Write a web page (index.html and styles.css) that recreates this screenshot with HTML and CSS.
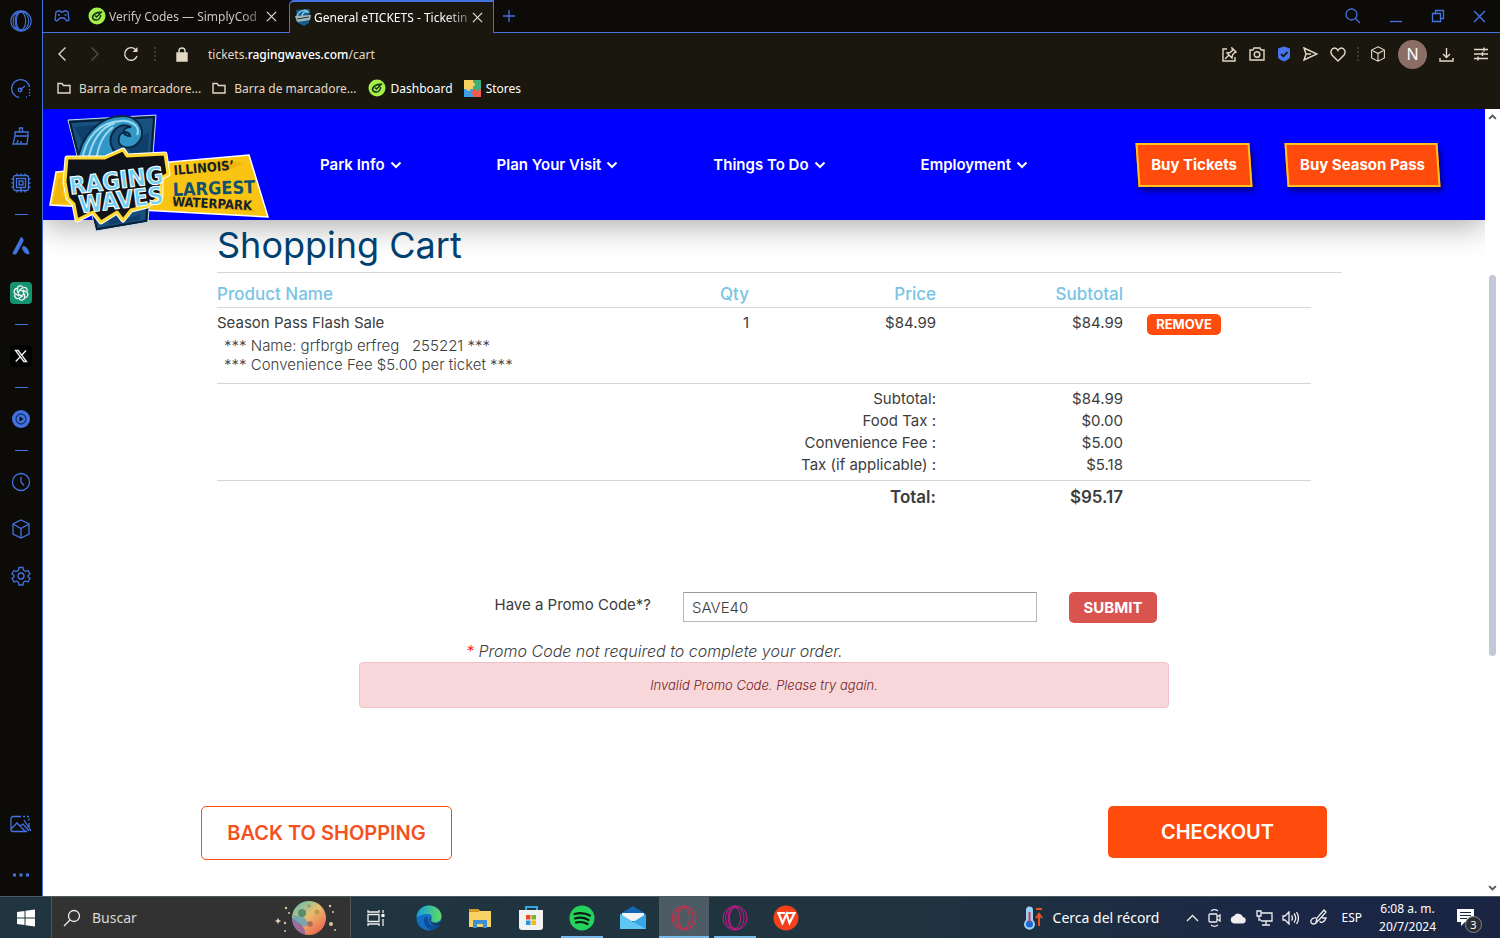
FILE: index.html
```html
<!DOCTYPE html>
<html lang="en">
<head>
  <meta charset="UTF-8">
  <meta name="viewport" content="width=device-width, initial-scale=1">
  <title>General eTICKETS - Ticketing</title>
  <link rel="stylesheet" href="styles.css">
</head>
<body>
  <!-- shared icons -->
  <svg class="sprite" aria-hidden="true">
    <symbol id="close" viewBox="0 0 12 12"><path d="M1 1l10 10M11 1L1 11"/></symbol>
    <symbol id="folder" viewBox="0 0 14 12"><path d="M1 1.500h4l1.500 2H13V11H1z"/></symbol>
    <symbol id="cube" viewBox="0 0 20 20"><path d="M10 1l8 4v10l-8 4-8-4V5zM2 5l8 4.500 8-4.500M10 9.500V19"/></symbol>
    <symbol id="opera" viewBox="0 0 26 26"><circle cx="13" cy="13" r="12"/><ellipse cx="13" cy="13" rx="5.500" ry="10.500"/><path d="M9 3C2 6 2 20 9 23M13 1.500c12 1 12 22 0 23M13 1.500C4 3 4 23 13 24.500"/></symbol>
    <symbol id="down" viewBox="0 0 12 8"><path d="M1.500 1.500L6 6l4.500-4.500"/></symbol>
    <symbol id="check-leaf" viewBox="0 0 18 18"><circle cx="9" cy="9" r="8.500" fill="#a6f04a" stroke="none"/><path d="M14 4.500L8.500 10 6.800 8.500M13 5.500C9 5 5 7 4.500 10c0 3 4 4 6.500 2 1.200-1 1.800-2.500 1.500-4" stroke="#17351a" stroke-width="1.600" fill="none"/></symbol>
  </svg>

  <div class="browser">
    <aside class="sidebar">
      <button class="side-btn side-first" aria-label="Opera"><svg width="22" height="22"><use href="#opera"/></svg></button>
      <button class="side-btn" aria-label="Speed dial"><svg width="20" height="20" viewBox="0 0 20 20"><path d="M8 18.500A9 9 0 1 1 18.500 8M9 11l5-4"/><circle cx="9" cy="11" r="1.800"/><path d="M18.500 10v7M15 18h1" stroke-dasharray="1.500 1.500"/></svg></button>
      <button class="side-btn" aria-label="Cleaner"><svg width="18" height="20" viewBox="0 0 18 20"><path d="M7.500 6V2h3v4M3 6h13v4H3zM3 10L1 18h14l1-8M5 18l1-4M9 18v-3"/></svg></button>
      <button class="side-btn" aria-label="GX Control"><svg width="20" height="20" viewBox="0 0 20 20"><rect x="2.500" y="2.500" width="15" height="15" rx="2"/><rect x="5.500" y="5.500" width="9" height="9"/><rect x="8" y="8" width="4" height="4"/><path d="M6 .5v2M10 .5v2M14 .5v2M6 17.500v2M10 14v5.500M14 17.500v2M.5 6h2M.5 10h2M.5 14h2M17.500 6h2M17.500 10h2M17.500 14h2"/></svg></button>
      <hr>
      <button class="side-btn" aria-label="Aria"><svg width="18" height="20" viewBox="0 0 18 20"><path class="solid" d="M9 1c1 0 3 2 2.500 4L5 17c-1 2-4 2-4.500 0zM11 10c3 0 6 3 6.500 8-3 1-6-1-7.500-6z"/></svg></button>
      <button class="side-btn" aria-label="ChatGPT"><svg class="gpt" width="22" height="22" viewBox="0 0 22 22"><rect width="22" height="22" rx="4" fill="#159270" stroke="none"/><path d="M11 8.200L7.500 10V6.500C7.500 3.500 12 3 13 5.500"/><path d="M11 8.200L7.500 10V6.500C7.500 3.500 12 3 13 5.500" transform="rotate(60 11 11)"/><path d="M11 8.200L7.500 10V6.500C7.500 3.500 12 3 13 5.500" transform="rotate(120 11 11)"/><path d="M11 8.200L7.500 10V6.500C7.500 3.500 12 3 13 5.500" transform="rotate(180 11 11)"/><path d="M11 8.200L7.500 10V6.500C7.500 3.500 12 3 13 5.500" transform="rotate(240 11 11)"/><path d="M11 8.200L7.500 10V6.500C7.500 3.500 12 3 13 5.500" transform="rotate(300 11 11)"/></svg></button>
      <hr>
      <button class="side-btn" aria-label="X"><svg class="gpt" width="22" height="22" viewBox="0 0 22 22"><rect width="22" height="22" rx="4" fill="#000" stroke="none"/><path d="M5.500 5.500h2.700l8.300 11h-2.700zM16 5.500l-4.300 4.800M10 12l-4.300 4.500"/></svg></button>
      <hr>
      <button class="side-btn" aria-label="Player"><svg width="20" height="20" viewBox="0 0 20 20"><circle class="solid" cx="10" cy="10" r="9"/><circle cx="10" cy="10" r="5" stroke="#173478"/><path d="M8.500 7.500v5l4-2.500z" fill="#0c0b09" stroke="none"/></svg></button>
      <hr>
      <button class="side-btn" aria-label="History"><svg width="20" height="20" viewBox="0 0 20 20"><circle cx="10" cy="10" r="8.500"/><path d="M10 5v5l3 3.500"/></svg></button>
      <button class="side-btn" aria-label="Extensions"><svg width="20" height="20"><use href="#cube"/></svg></button>
      <button class="side-btn" aria-label="Settings"><svg width="20" height="20" viewBox="0 0 20 20"><circle cx="10" cy="10" r="3"/><path d="M8 1.500h4l.5 2.700 2 1.200L17 4.500l2 3.400-2 1.600v1.500l2 1.500-2 3.500-2.600-1-2 1.300-.4 2.700H8l-.5-2.700-2-1.200L3 16l-2-3.500L3 11V9.500L1 7.900l2-3.400 2.500 1 2-1.300z"/></svg></button>
      <span class="side-space"></span>
      <button class="side-btn" aria-label="Wallpaper"><svg width="22" height="18" viewBox="0 0 22 18"><path d="M11 1.500H3a2 2 0 0 0-2 2v11a2 2 0 0 0 2 2h14M19 8v4M1 14l6-6 8 8M10 11l3-2 6 7M14 5l7 11"/><path d="M13 1.500h6v5" stroke-dasharray="2 2"/></svg></button>
      <button class="side-btn side-last" aria-label="More"><svg width="18" height="6" viewBox="0 0 18 6"><path class="solid" d="M1 1.500h3v3H1zM7.500 1.500h3v3h-3zM14 1.500h3v3h-3z"/></svg></button>
    </aside>

    <div class="window">
      <div class="tabs">
        <svg class="pad" width="16" height="14" viewBox="0 0 16 14"><path d="M4 2h2l1 1h2l1-1h2l2 1 1 8-2 1-3-3H6l-3 3-2-1 1-8z"/><path d="M4 6h2M10.500 6h2"/></svg>
        <div class="tab">
          <svg width="18" height="18"><use href="#check-leaf"/></svg>
          <span class="tab-title">Verify Codes — SimplyCod</span>
          <button aria-label="Close tab"><svg width="11" height="11"><use href="#close"/></svg></button>
        </div>
        <div class="tab tab-active">
          <svg width="16" height="18" viewBox="0 0 16 18"><path d="M1 2l14-1-1 14-5 3-6-3z" fill="#175a8c"/><path d="M2 8c2-6 9-7 11-4-5-1-6 2-6 5" stroke="#7cc9e8" stroke-width="1.500" fill="none"/><path d="M0 8l16-1-1 5-13 2z" fill="#9fb6b6"/><path d="M2 11l12-2" stroke="#234"/></svg>
          <span class="tab-title">General eTICKETS - Ticketin</span>
          <button aria-label="Close tab"><svg width="11" height="11"><use href="#close"/></svg></button>
        </div>
        <button class="new-tab" aria-label="New tab"><svg width="12" height="12" viewBox="0 0 12 12"><path d="M6 0v12M0 6h12"/></svg></button>
        <div class="window-controls">
          <button aria-label="Search tabs"><svg width="16" height="16" viewBox="0 0 16 16"><circle cx="6.500" cy="6.500" r="5.500"/><path d="M10.500 10.500L15 15"/></svg></button>
          <button aria-label="Minimize"><svg width="14" height="14" viewBox="0 0 14 14"><path d="M1 12.500h12"/></svg></button>
          <button aria-label="Restore"><svg width="14" height="14" viewBox="0 0 14 14"><path d="M1.500 4.500h8v8h-8zM4.500 4.500v-3h8v8h-3"/></svg></button>
          <button aria-label="Close"><svg width="13" height="13"><use href="#close"/></svg></button>
        </div>
      </div>

      <div class="toolbar">
        <div class="address-row">
          <button aria-label="Back"><svg width="10" height="16" viewBox="0 0 10 16"><path d="M8.500 1.500L2 8l6.500 6.500"/></svg></button>
          <button class="dim" aria-label="Forward"><svg width="10" height="16" viewBox="0 0 10 16"><path d="M1.500 1.500L8 8l-6.500 6.500"/></svg></button>
          <button aria-label="Reload"><svg width="16" height="16" viewBox="0 0 16 16"><path d="M14 10a6.300 6.300 0 1 1-1.500-6.500L14 5"/><path d="M14.500 1v5H9.500z" fill="currentColor" stroke="none"/></svg></button>
          <span class="dots"></span>
          <svg class="lock" width="12" height="15" viewBox="0 0 12 15"><path d="M1 6h10v8H1z" fill="currentColor"/><path d="M3 6V4a3 3 0 0 1 6 0v2"/></svg>
          <div class="url">tickets.<b>ragingwaves.com</b>/cart</div>
          <div class="tools">
            <button aria-label="Pinboard"><svg width="15" height="15" viewBox="0 0 15 15"><path d="M5 2H1v12h12v-4M10 1l4 4-1.500.5-2 2.500-.5 3-5-5 3-.5 2.500-2zM7 8l-4 4"/></svg></button>
            <button aria-label="Snapshot"><svg width="16" height="14" viewBox="0 0 16 14"><path d="M1 3h3l1-2h6l1 2h3v10H1z"/><circle cx="8" cy="7.500" r="2.800"/></svg></button>
            <button aria-label="Ad blocker"><svg width="14" height="16" viewBox="0 0 14 16"><path d="M7 .5l6 2v8c0 2-3 4-6 5-3-1-6-3-6-5v-8z" fill="#4775ed" stroke="none"/><path d="M4 8l2.300 2.300L10.500 6" stroke="#1a170f" stroke-width="1.800"/></svg></button>
            <button aria-label="My Flow"><svg width="15" height="14" viewBox="0 0 15 14"><path d="M1 1l13 6-13 6 2-6zM3 7h5"/></svg></button>
            <button aria-label="Add bookmark"><svg width="16" height="15" viewBox="0 0 16 15"><path d="M8 14L2 8C-.5 4.500 2 1 4.500 1 6.500 1 7.500 2.500 8 3.500 8.500 2.500 9.500 1 11.500 1 14 1 16.500 4.500 14 8z"/></svg></button>
            <span class="dots"></span>
            <button aria-label="Extensions"><svg width="16" height="16"><use href="#cube"/></svg></button>
            <button class="avatar">N</button>
            <button aria-label="Downloads"><svg width="15" height="15" viewBox="0 0 15 15"><path d="M7.500 1v9M4 7l3.500 3.500L11 7M1 11v3h13v-3"/></svg></button>
            <button aria-label="Easy setup"><svg width="14" height="14" viewBox="0 0 14 14"><path d="M0 2.500h14M0 7h14M0 11.500h14M10 .5v4M4 9.500v4M8.500 5v4"/></svg></button>
          </div>
        </div>
        <div class="bookmarks">
          <a class="folder" href="#"><svg width="14" height="12"><use href="#folder"/></svg>Barra de marcadore...</a>
          <a class="folder" href="#"><svg width="14" height="12"><use href="#folder"/></svg>Barra de marcadore...</a>
          <a href="#"><svg width="18" height="18"><use href="#check-leaf"/></svg>Dashboard</a>
          <a href="#"><svg width="17" height="17" viewBox="0 0 17 17"><path d="M0 0h9v9H0z" fill="#f7d060"/><path d="M9 0h8v9H9z" fill="#3fae7c"/><path d="M0 9h9v8H0z" fill="#3d9fe8"/><path d="M9 9h8v8H9z" fill="#ef5c50"/><circle cx="9" cy="4.500" r="2" fill="#f7d060"/><circle cx="4.500" cy="9" r="2" fill="#f7d060"/><circle cx="9" cy="13" r="2" fill="#ef5c50"/><circle cx="13" cy="9" r="2" fill="#3fae7c"/></svg>Stores</a>
        </div>
      </div>

      <div class="viewport">
        <div class="page">
          <header class="site-header">
            <a class="logo" href="#" aria-label="Raging Waves">
              <svg width="220" height="120" viewBox="0 0 220 120">
                <path d="M7 60l193-17 19 62L1 93z" fill="#f9c512" stroke="#fff" stroke-width="1.500"/>
                <path d="M9 67l12-4 2 8-10 8 5 12-14 1zM122 90l20-8 15 12 30-4 22 10-84-6zM150 52l20-3 25 2-16 7z" fill="#e9a90d" opacity=".6"/>
                <path d="M19 8l88-5-8 107-52 9z" fill="#17527f" stroke="#c8dcea"/>
                <path d="M21 10l84-5-8 104-49 8z" fill="#17527f" stroke="#0b1c35" stroke-width="2"/>
                <path d="M25 15l20-2 9 8-20 10zM78 34l22-14-1 20-16 3zM60 104l20 2 12-4-2 6-30 5z" fill="#0f3f6b"/>
                <path d="M28 52C31 23 52 3 75 4c16 1 23 17 14 27-8 8-22 5-19-6 2-6 10-6 11-1-9 0-8-9 1-9-12-6-23 6-20 18l7 15z" fill="#3097c7" stroke="#0b2744" stroke-width="2"/>
                <path d="M33 49C36 26 51 9 73 9M39 50c3-21 13-35 27-39M47 50c2-17 7-27 17-35M88 23c4-9-7-17-21-13" fill="none" stroke="#9cdbee" stroke-width="2"/>
                <path d="M18 46h38l18-8 4 6 38-2 3 20-7 4v18l-14 10-16 4-8 10-6-8-16 10-8-10-16 8-3-16-6-6-3-16z" fill="#101318" stroke="#fff" stroke-width="5" stroke-linejoin="round"/>
                <path d="M18 46h38l18-8 4 6 38-2 3 20-7 4v18l-14 10-16 4-8 10-6-8-16 10-8-10-16 8-3-16-6-6-3-16z" fill="#101318" stroke="#ffd832" stroke-width="3" stroke-linejoin="round"/>
                <g class="logo-name">
                  <text x="20" y="77" transform="rotate(-7 66 70)">RAGING</text>
                  <text x="30" y="97" transform="rotate(-7 66 90)">WAVES</text>
                </g>
                <g class="logo-tag">
                  <text x="125" y="63" transform="rotate(-5 125 63)">ILLINOIS’</text>
                  <text class="largest" x="124" y="84" transform="rotate(-2 124 84)">LARGEST</text>
                  <text x="123" y="94" transform="rotate(3 123 94)">WATERPARK</text>
                </g>
              </svg>
            </a>
            <nav class="site-nav">
              <button>Park Info <svg width="12" height="8"><use href="#down"/></svg></button>
              <button>Plan Your Visit <svg width="12" height="8"><use href="#down"/></svg></button>
              <button>Things To Do <svg width="12" height="8"><use href="#down"/></svg></button>
              <button>Employment <svg width="12" height="8"><use href="#down"/></svg></button>
            </nav>
            <div class="buy">
              <a class="buy-btn" href="#">Buy Tickets</a>
              <a class="buy-btn" href="#">Buy Season Pass</a>
            </div>
          </header>

          <main class="container">
            <section class="cart">
              <h1>Shopping Cart</h1>
              <table>
                <thead>
                  <tr><th class="name">Product Name</th><th class="qty">Qty</th><th class="money">Price</th><th class="money">Subtotal</th><th class="action"></th></tr>
                </thead>
                <tbody class="items">
                  <tr>
                    <td class="name">Season Pass Flash Sale</td><td>1</td><td>$84.99</td><td>$84.99</td>
                    <td class="action"><button class="remove">REMOVE</button></td>
                  </tr>
                  <tr><td class="notes" colspan="5">*** Name: grfbrgb erfreg &nbsp; 255221 ***<br>*** Convenience Fee $5.00 per ticket ***</td></tr>
                </tbody>
                <tbody class="sums">
                  <tr><td colspan="3">Subtotal:</td><td>$84.99</td><td></td></tr>
                  <tr><td colspan="3">Food Tax :</td><td>$0.00</td><td></td></tr>
                  <tr><td colspan="3">Convenience Fee :</td><td>$5.00</td><td></td></tr>
                  <tr><td colspan="3">Tax (if applicable) :</td><td>$5.18</td><td></td></tr>
                </tbody>
                <tfoot>
                  <tr><td colspan="3">Total:</td><td>$95.17</td><td></td></tr>
                </tfoot>
              </table>
            </section>

            <form class="promo">
              <div class="promo-row">
                <label for="promo">Have a Promo Code*?</label>
                <input id="promo" type="text" value="SAVE40">
                <button type="button">SUBMIT</button>
              </div>
              <p class="promo-note"><span>*</span> Promo Code not required to complete your order.</p>
              <div class="alert">Invalid Promo Code. Please try again.</div>
            </form>

            <div class="actions">
              <button class="back">BACK TO SHOPPING</button>
              <button class="checkout">CHECKOUT</button>
            </div>
          </main>
        </div>
        <div class="scrollbar">
          <svg width="9" height="6" viewBox="0 0 12 8"><path d="M1.500 6.500L6 2l4.500 4.500"/></svg>
          <span class="thumb"></span>
          <svg width="9" height="6"><use href="#down"/></svg>
        </div>
      </div>
    </div>
  </div>

  <footer class="taskbar">
    <button class="start" aria-label="Start"><svg width="18" height="18" viewBox="0 0 18 18"><path d="M0 3l7.500-1v6.500H0zM8.500 1.800L18 .5v8H8.500zM0 9.500h7.500V16L0 15zM8.500 9.500H18v8l-9.500-1.300z" fill="#fff"/></svg></button>
    <label class="search">
      <svg width="18" height="18" viewBox="0 0 18 18"><circle cx="11" cy="7" r="5.500"/><path d="M7 11l-6 6"/></svg>
      <input type="text" placeholder="Buscar" aria-label="Buscar">
      <svg width="64" height="36" viewBox="0 0 64 36">
        <defs><linearGradient id="moon" x1="0" y1="0" x2=".8" y2="1"><stop offset="0" stop-color="#4cc0bd"/><stop offset=".5" stop-color="#e9bd6e"/><stop offset="1" stop-color="#ec5f4c"/></linearGradient></defs>
        <g stroke="none">
          <circle cx="36" cy="18" r="17" fill="url(#moon)"/>
          <path d="M19 18c0 9 6 15 13 16.500 1-6-4-12-13-16.500z" fill="#8356a5" opacity=".75"/>
          <path d="M20 15c0 9 7 8 12 12 5-4 1-8-2-10z" fill="#4e9fc4" opacity=".7"/>
          <circle cx="29" cy="13" r="4" fill="#5d8d6d"/><circle cx="44" cy="12" r="2.500" fill="#c1984f"/><circle cx="37" cy="24" r="2.800" fill="#b06852"/><circle cx="36" cy="6" r="1.500" fill="#7fa365"/>
          <path d="M4 20l1-2 1 2 2 1-2 1-1 2-1-2-2-1z" fill="#e5d9b5"/>
          <g fill="#d8c99c"><circle cx="13" cy="8" r="1.200"/><circle cx="16" cy="13" r="1"/><circle cx="12" cy="23" r="1.200"/><circle cx="12" cy="31" r="1"/><circle cx="57" cy="6" r="1.200"/><circle cx="60" cy="12" r="1"/><circle cx="58" cy="24" r="2"/><circle cx="62" cy="30" r="1"/></g>
        </g>
      </svg>
    </label>
    <div class="apps">
      <button aria-label="Task view"><svg class="line" width="18" height="18" viewBox="0 0 18 18"><path d="M1 1v2h11V1M1 5.500h11v7H1zM1 17v-2h11v2M16 1v3M16 10v7"/><path d="M14.500 5h3v3h-3z" fill="#fff" stroke="none"/></svg></button>
      <button aria-label="Edge"><svg width="26" height="26" viewBox="0 0 26 26"><defs><linearGradient id="edge" x2="1"><stop offset="0" stop-color="#199be2"/><stop offset="1" stop-color="#5edb62"/></linearGradient></defs><circle cx="13" cy="13" r="12.500" fill="#126fc4"/><path d="M.5 12C1 5 7 .5 13 .5S25.500 5 25.500 11c0 5-4 7-8 6-2-.5-3-1-2-3 1.500-3-1-5-4-5-5 0-8 2-11 3z" fill="url(#edge)"/><path d="M9 12c-3 6 1 12 7 13 4-1 7-3 8-6-6 3-12 1-12-4 0-2 0-3-3-3z" fill="#0c4c98"/><path d="M14 13c2 1 0 3 1 4 3 2 7 2 10-1l.5 1-1.500 2c-5 3-11 0-10-6z" fill="#20343f"/></svg></button>
      <button aria-label="Explorer"><svg width="24" height="20" viewBox="0 0 24 20"><path d="M1 1h9l2 2h11v16H1z" fill="#f9d266"/><path d="M1 1h9l1 3H1z" fill="#d59a1c"/><path d="M5 12h14v8h-4v-4H9v4H5z" fill="#3e8ed2"/></svg></button>
      <button aria-label="Store"><svg width="24" height="26" viewBox="0 0 24 26"><path d="M7 7V2h11v5" fill="none" stroke="#37a6e0" stroke-width="2"/><path d="M0 5h24v17q0 3-3 3H3q-3 0-3-3z" fill="#f2f2f2"/><path d="M7 10h4.500v4.500H7z" fill="#ea4a26"/><path d="M12.500 10H17v4.500h-4.500z" fill="#7bb527"/><path d="M7 15.500h4.500V20H7z" fill="#2398dc"/><path d="M12.500 15.500H17V20h-4.500z" fill="#f8b514"/></svg></button>
      <button class="open" aria-label="Spotify"><svg width="26" height="26" viewBox="0 0 26 26"><circle cx="13" cy="13" r="12.500" fill="#23d35e"/><path d="M5.500 9c5-1.500 11-1 15.500 1.500M6 13.500c5-1.500 9-1 13.500 1.500M7 17.500c4-1 8-.5 11.500 1.500" fill="none" stroke="#0b1a12" stroke-width="2.200" stroke-linecap="round"/></svg></button>
      <button aria-label="Mail"><svg width="26" height="24" viewBox="0 0 26 24"><path d="M0 8l13-8 13 8v15H0z" fill="#1565b2"/><path d="M2 7h22v8H2z" fill="#f4f4f4"/><path d="M0 8l13 8 13-8v15H0z" fill="#36a8e8"/><path d="M0 8l13 8L26 23H0z" fill="#5fc6f4"/></svg></button>
      <button class="open active" aria-label="Opera GX"><svg class="gx" width="26" height="26"><use href="#opera"/></svg></button>
      <button class="open" aria-label="Opera GX"><svg class="gx pink" width="26" height="26"><use href="#opera"/></svg></button>
      <button aria-label="WPS Office"><svg width="26" height="26" viewBox="0 0 26 26"><circle cx="13" cy="13" r="12.500" fill="#f4401d"/><path d="M4 8h8M5.500 8l4 10 4-9 3 9 5-10h-8" fill="none" stroke="#fff" stroke-width="2.200"/></svg></button>
    </div>
    <div class="tray">
      <button class="weather"><svg width="20" height="24" viewBox="0 0 20 24"><path d="M3 4a3.500 3.500 0 0 1 7 0v10a5.500 5.500 0 1 1-7 0z" fill="#9bd0f7"/><circle cx="6.500" cy="18" r="3.500" fill="#1e68cf"/><path d="M6.500 16V6" stroke="#d33b4b" stroke-width="2"/><path d="M13 3h6M16 20V9M13 12l3-4 3 4" fill="none" stroke="#e8551c" stroke-width="2"/></svg>Cerca del récord</button>
      <div class="tray-icons">
        <svg width="13" height="8" viewBox="0 0 13 8"><path d="M1 7l5.500-5.500L12 7"/></svg>
        <svg width="13" height="18" viewBox="0 0 13 18"><rect x="1" y="5" width="8" height="8" rx="1"/><path d="M9 8l3-2v6L9 10M3 2c2-1.500 5-1.500 7 0M3 16c2 1.500 5 1.500 7 0"/></svg>
        <svg width="17" height="12" viewBox="0 0 17 12"><path d="M4 11.500a3.800 3.800 0 0 1 0-7.500 5 5 0 0 1 9 1 3.300 3.300 0 0 1 0 6.500z" fill="#eee" stroke="none"/></svg>
        <svg width="17" height="16" viewBox="0 0 17 16"><path d="M5 3h11v8H5M10 11v4M6 15h8M1 1h4v5H1zM3 6v4h2"/></svg>
        <svg width="17" height="14" viewBox="0 0 17 14"><path d="M1 5h2l4-4v12L3 9H1zM9.500 4.500q2 2.500 0 5M12 2.500q3.500 4.500 0 9M14.500 1q4 6 0 12"/></svg>
      </div>
      <svg class="pen" width="18" height="18" viewBox="0 0 18 18"><path d="M6 13l1-4 7-8 2 2-7 8zM6 9c-5-1-7 5-3 6 4 0 4-3 5-3M10 12c0 3 5 1 6-3l-4 0"/></svg>
      <span class="lang">ESP</span>
      <div class="clock">6:08 a. m.<br>20/7/2024</div>
      <button class="notify" aria-label="Notifications"><svg width="17" height="17" viewBox="0 0 17 17"><path d="M0 0h17v13H8l-4 4v-4H0z" fill="#fff"/><path d="M3 3.500h11M3 6.500h11M3 9.500h7" stroke="#1b2740"/></svg><span class="badge">3</span></button>
    </div>
  </footer>
</body>
</html>
```

FILE: styles.css
```css
* {
  box-sizing: border-box;
}
body {
  margin: 0;
  height: 100vh;
  display: flex;
  flex-direction: column;
  overflow: hidden;
  font-family: "Noto Sans", "Open Sans", sans-serif;
  font-size: 12px;
  background: #0c0b08;
}
button, input {
  font: inherit;
  color: inherit;
}
button {
  background: none;
  border: none;
  padding: 0;
  cursor: pointer;
}
a {
  color: inherit;
  text-decoration: none;
}
svg {
  display: block;
  flex: none;
}
.sprite {
  position: absolute;
  width: 0;
  height: 0;
}

/* browser */
.browser {
  flex: 1;
  min-height: 0;
  display: flex;
}
.sidebar {
  width: 42px;
  flex: none;
  display: flex;
  flex-direction: column;
  align-items: center;
  gap: 15px;
  padding: 5px 0;
}
.sidebar svg, .tabs > svg, .new-tab svg, .window-controls svg {
  fill: none;
  stroke: #4373e0;
  stroke-width: 1.3;
}
.sidebar .solid {
  fill: #4373e0;
  stroke: none;
}
.sidebar .gpt {
  stroke: #f2f2f2;
}
.sidebar hr {
  width: 13px;
  height: 1px;
  margin: 0;
  border: none;
  background: #4373e0;
}
.side-btn {
  width: 32px;
  height: 32px;
  flex: none;
  display: grid;
  place-items: center;
}
.side-first {
  margin-bottom: 21px;
}
.side-space {
  flex: 1;
}
.side-last {
  margin-top: 4px;
}
.window {
  flex: 1;
  min-width: 0;
  display: flex;
  flex-direction: column;
  border-left: 1px solid #4373e0;
}
.tabs {
  height: 33px;
  flex: none;
  display: flex;
  align-items: center;
  color: #c9c6bf;
  border-bottom: 1px solid #4373e0;
}
.pad {
  margin: 0 13px 0 11px;
}
.tab {
  width: 206px;
  height: 33px;
  padding: 0 12px 0 5px;
  display: flex;
  align-items: center;
  gap: 3px;
}
.tab-active {
  padding-right: 10px;
  width: 205px;
  color: #fff;
  background: #1a170f;
  border: 1px solid #4373e0;
  border-top-width: 2px;
  border-bottom: none;
  border-top-left-radius: 5px;
}
.tab-title {
  flex: 1;
  white-space: nowrap;
  mask-image: linear-gradient(to right, #000 85%, rgba(0, 0, 0, 0.3));
}
.tab button svg {
  fill: none;
  stroke: #e4e0d8;
  stroke-width: 1.3;
}
.new-tab {
  margin-left: 9px;
}
.window-controls {
  margin-left: auto;
  padding-right: 14px;
  display: flex;
  align-items: center;
  gap: 28px;
}
.toolbar {
  height: 76px;
  flex: none;
  background: #1a170f;
  color: #e3d9c6;
}
.address-row {
  height: 42px;
  display: flex;
  align-items: center;
  padding: 0 12px 0 14px;
}
.address-row svg, .folder svg {
  fill: none;
  stroke: currentColor;
  stroke-width: 1.4;
}
.address-row > button {
  margin-right: 23px;
}
.address-row .dim {
  color: #55514a;
}
.address-row > .dots {
  margin: 0 20px 0 -8px;
}
.dots {
  height: 14px;
  border-left: 2px dotted #3f3a30;
}
.url {
  margin-left: 20px;
}
.url b {
  font-weight: 500;
  color: #fff;
}
.tools {
  margin-left: auto;
  display: flex;
  align-items: center;
  gap: 12px;
}
.tools .dots {
  margin: 0 -1px;
}
.avatar {
  width: 29px;
  height: 29px;
  border-radius: 50%;
  background: #8d6e66;
  color: #fff;
  font-size: 16px;
}
.tools button:last-child {
  margin-left: 8px;
}
.bookmarks {
  display: flex;
  align-items: center;
  gap: 11px;
  height: 26px;
  padding-left: 14px;
}
.bookmarks a {
  display: flex;
  align-items: center;
  gap: 5px;
  color: #fff;
}
.bookmarks .folder {
  gap: 8px;
  color: #e3d9c6;
}

/* park site */
.viewport {
  flex: 1;
  min-height: 0;
  display: flex;
  background: #fff;
}
.page {
  flex: 1;
  min-width: 0;
  overflow: hidden;
  font-family: Inter, sans-serif;
  font-size: 15px;
  color: #3c3c3c;
}
.site-header {
  position: relative;
  height: 111px;
  display: flex;
  align-items: center;
  padding: 0 46px 0 6px;
  background: #0000fe;
  color: #fff;
  box-shadow: 0 5px 30px rgba(0, 0, 0, 0.35);
}
.logo {
  height: 105px;
}
.logo text {
  font-family: "DejaVu Sans Condensed", "DejaVu Sans", sans-serif;
  font-weight: bold;
}
.logo-name text {
  font-size: 24px;
  fill: #6fcdf0;
  stroke: #fff;
  stroke-width: 1;
}
.logo-tag text {
  font-size: 13px;
  fill: #14202b;
}
.logo-tag .largest {
  font-size: 18px;
  fill: #11506f;
}
.site-nav {
  flex: 1;
  display: flex;
  gap: 95px;
  margin-left: 51px;
  line-height: 18px;
  font-weight: 600;
}
.site-nav button {
  display: flex;
  align-items: center;
  gap: 5px;
}
.site-nav svg {
  fill: none;
  stroke: #fff;
  stroke-width: 2;
}
.buy {
  display: flex;
  gap: 35px;
}
.buy-btn {
  position: relative;
  z-index: 1;
  padding: 0 14px;
  line-height: 44px;
  font-weight: 700;
}
.buy-btn::before {
  content: "";
  position: absolute;
  inset: 0;
  z-index: -1;
  background: #ff4b0b;
  border: 2px solid #ffc21c;
  box-shadow: 2px 4px 6px rgba(0, 0, 0, 0.5);
  transform: skewX(4deg);
}
.container {
  max-width: 1126px;
  margin: 0 auto;
}
.cart {
  margin: 0 -15px 0 16px;
}
h1 {
  position: relative;
  margin: 0;
  padding: 4px 0 5px;
  font-size: 36px;
  line-height: 43px;
  font-weight: 400;
  color: #00406f;
  border-bottom: 1px solid #d6d6d6;
}
table {
  width: calc(100% - 31px);
  table-layout: fixed;
  border-collapse: collapse;
}
th, td {
  padding: 0;
  text-align: right;
  vertical-align: top;
  line-height: 22px;
}
th {
  padding: 10px 0 2px;
  font-size: 17px;
  font-weight: 500;
  color: #79c4e5;
}
.name, .notes {
  text-align: left;
}
th.qty {
  width: 100px;
}
th.money {
  width: 187px;
}
th.action {
  width: 188px;
}
.action {
  padding-left: 24px;
  text-align: left;
}
tbody {
  border-top: 1px solid #d6d6d6;
}
.items tr:first-child td {
  padding-top: 4px;
}
.items .notes {
  padding: 1px 0 9px 7px;
  line-height: 19px;
  font-weight: 300;
}
.remove {
  display: block;
  width: 74px;
  height: 21px;
  margin-top: 2px;
  border-radius: 5px;
  background: #ff4b0b;
  color: #fff;
  font-size: 13px;
  line-height: 21px;
  font-weight: 700;
}
.sums tr:first-child td {
  padding-top: 4px;
}
.sums tr:last-child td {
  padding-bottom: 4px;
}
tfoot {
  border-top: 1px solid #d6d6d6;
  font-size: 17px;
  font-weight: 600;
}
tfoot td {
  padding-top: 5px;
}
.promo {
  width: 810px;
  max-width: 100%;
  margin: 84px auto 0;
}
.promo-row {
  display: grid;
  grid-template-columns: 292px 354px 88px;
  column-gap: 32px;
  align-items: start;
}
.promo-row label {
  text-align: right;
  line-height: 26px;
}
.promo-row input {
  height: 30px;
  min-width: 0;
  padding: 0 8px;
  border: 1px solid #b9b9b9;
  border-top-color: #999;
  font-weight: 300;
}
.promo-row button {
  height: 31px;
  border-radius: 5px;
  background: #d9534f;
  color: #fff;
  font-weight: 700;
}
.promo-note {
  margin: 17px 0 0 107px;
  font-size: 16px;
  line-height: 22px;
  font-style: italic;
  font-weight: 300;
}
.promo-note span {
  color: #f00;
}
.alert {
  padding: 11px;
  border: 1px solid #f1bfc5;
  border-radius: 4px;
  background: #f8d7da;
  color: #721c24;
  text-align: center;
  font-size: 13px;
  line-height: 22px;
  font-style: italic;
  font-weight: 300;
}
.actions {
  display: flex;
  justify-content: space-between;
  align-items: flex-start;
  margin-top: 98px;
  font-size: 20px;
  font-weight: 600;
}
.back {
  width: 251px;
  height: 54px;
  border: 1px solid #ff4b0b;
  border-radius: 5px;
  color: #f4511e;
}
.checkout {
  width: 219px;
  height: 52px;
  border-radius: 5px;
  background: #ff4b0b;
  color: #fff;
}
.scrollbar {
  width: 15px;
  display: flex;
  flex-direction: column;
  align-items: center;
  padding: 5px 0;
  background: #fff;
}
.scrollbar svg {
  fill: none;
  stroke: #555;
  stroke-width: 2.5;
}
.thumb {
  width: 7px;
  height: 49%;
  margin: 155px 0 auto;
  border-radius: 4px;
  background: #c3c9d6;
}

/* taskbar */
.taskbar {
  height: 42px;
  flex: none;
  display: flex;
  color: #fff;
  border-top: 1px solid #4d5b60;
  background: linear-gradient(to right, #20353f, #20343f 60%, #1b2745 85%, #1a2544);
}
.start {
  width: 51px;
  display: grid;
  place-items: center;
}
.search {
  width: 300px;
  display: flex;
  align-items: center;
  gap: 11px;
  padding: 0 13px 0 11px;
  background: #323232;
  border: 1px solid #565656;
  border-width: 0 1px;
}
.search svg, .taskbar .line, .tray-icons svg, .pen {
  fill: none;
  stroke: #eee;
  stroke-width: 1.3;
}
.search input {
  flex: 1;
  min-width: 0;
  padding: 0;
  border: none;
  background: none;
  font-size: 14px;
}
.search input::placeholder {
  color: #d8d8d8;
  opacity: 1;
}
.apps {
  display: flex;
  gap: 1px;
}
.apps button {
  width: 50px;
  display: grid;
  place-items: center;
}
.apps button:first-child {
  margin-right: 2px;
}
.apps .open {
  position: relative;
}
.apps .open::after {
  content: "";
  position: absolute;
  inset: auto 4px 0;
  height: 2px;
  background: #76b9ed;
}
.apps .active {
  background: #4d5c64;
}
.apps .active::after {
  inset: auto 0 0;
}
.gx {
  fill: none;
  stroke: #d12c4c;
}
.pink {
  stroke: #c9188a;
}
.tray {
  margin-left: auto;
  display: flex;
  align-items: center;
  padding-right: 18px;
}
.weather {
  display: flex;
  align-items: center;
  gap: 10px;
  margin-right: 27px;
  font-size: 14px;
}
.tray-icons {
  display: flex;
  align-items: center;
  gap: 9px;
}
.pen {
  margin: 0 13px 0 11px;
}
.clock {
  margin: 0 21px 0 17px;
  text-align: center;
  line-height: 18px;
}
.notify {
  position: relative;
  width: 25px;
}
.badge {
  position: absolute;
  left: 8px;
  top: 7px;
  width: 17px;
  height: 17px;
  border: 1px solid #888;
  border-radius: 50%;
  background: #2b2d33;
  font-size: 11px;
  line-height: 15px;
}
```
